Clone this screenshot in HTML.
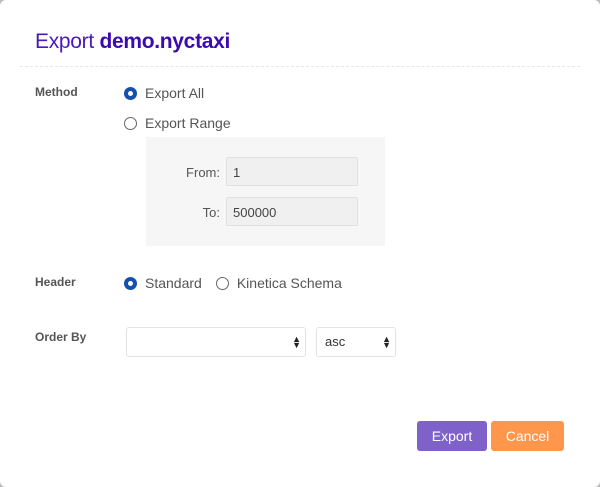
<!DOCTYPE html>
<html><head><style>
body{margin:0;width:600px;height:487px;background:#bbb;font-family:"Liberation Sans",sans-serif;overflow:hidden}
.d{position:absolute;left:0;top:0;width:600px;height:487px;background:#fff;border-radius:6px}
.a{position:absolute}
.t{left:35px;top:30px;font-size:21px;color:#4b18bd;letter-spacing:-0.3px}
.t b{color:#3d0ab0}
.hr{left:20px;top:66px;width:560px;border-top:1px dashed #e6e6ee}
.l{font-size:12px;font-weight:bold;color:#555}
.r{font-size:14px;color:#555;display:flex;align-items:center}
.c{width:11px;height:11px;border:1.3px solid #666;border-radius:50%;margin-right:8px;box-sizing:content-box}
.on{border:4px solid #1550b0;width:5px;height:5px;background:#fff}
.p{left:146px;top:137px;width:239px;height:109px;background:#f6f6f6}
.in{width:132px;height:29px;background:#f0f0f0;border:1px solid #e0e0e0;border-radius:2px;font-size:13px;color:#444;line-height:29px;padding-left:6px;box-sizing:border-box}
.fl{font-size:13px;color:#555;text-align:right;width:60px}
.s{height:30px;border:1px solid #e3e3e3;border-radius:3px;box-sizing:border-box;font-size:13px;color:#333;line-height:28px;padding-left:8px}
.ar{position:absolute;right:4px;top:8px;font-size:9px;line-height:6px;color:#222}
.b{height:30px;border-radius:3px;color:#fff;font-size:14px;text-align:center;line-height:30px}
</style></head><body><div class="d">
<div class="a t">Export <b>demo.nyctaxi</b></div>
<div class="a hr"></div>
<div class="a l" style="left:35px;top:85px">Method</div>
<div class="a r" style="left:124px;top:85px"><span class="c on"></span>Export All</div>
<div class="a r" style="left:124px;top:115px"><span class="c"></span>Export Range</div>
<div class="a p"></div>
<div class="a fl" style="left:160px;top:165px">From:</div>
<div class="a in" style="left:226px;top:157px">1</div>
<div class="a fl" style="left:160px;top:205px">To:</div>
<div class="a in" style="left:226px;top:197px">500000</div>
<div class="a l" style="left:35px;top:275px">Header</div>
<div class="a r" style="left:124px;top:275px"><span class="c on"></span>Standard<span class="c" style="margin-left:14px"></span>Kinetica Schema</div>
<div class="a l" style="left:35px;top:330px">Order By</div>
<div class="a s" style="left:126px;top:327px;width:180px"><span class="ar">▲<br>▼</span></div>
<div class="a s" style="left:316px;top:327px;width:80px">asc<span class="ar">▲<br>▼</span></div>
<div class="a b" style="left:417px;top:421px;width:70px;background:#7e62c9">Export</div>
<div class="a b" style="left:491px;top:421px;width:73px;background:#fe964c">Cancel</div>
</div></body></html>
